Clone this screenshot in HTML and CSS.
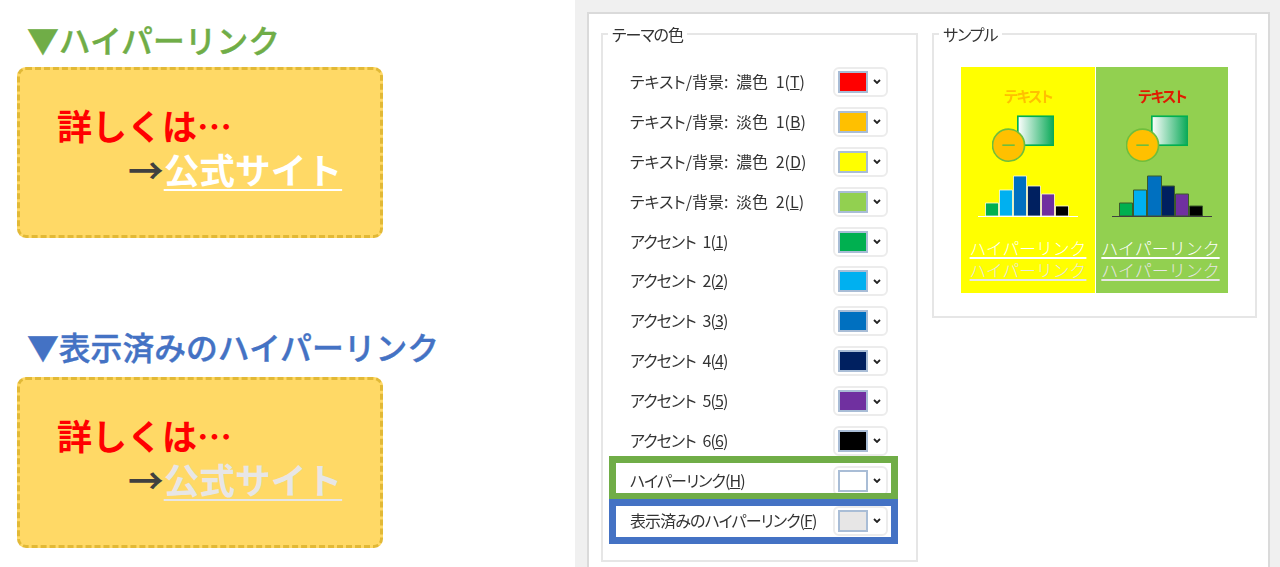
FILE: index.html
```html
<!DOCTYPE html>
<html lang="ja">
<head>
<meta charset="utf-8">
<title>テーマの色</title>
<link rel="stylesheet" href="styles.css">
</head>
<body>
<main class="page">
  <section class="examples">
    <div class="example">
      <h2 class="heading green-text">▼ハイパーリンク</h2>
      <div class="card">
        <p class="card-lead">詳しくは…</p>
        <p class="card-link"><span class="arrow">→</span><span class="link-new">公式サイト</span></p>
      </div>
    </div>
    <div class="example">
      <h2 class="heading blue-text">▼表示済みのハイパーリンク</h2>
      <div class="card">
        <p class="card-lead">詳しくは…</p>
        <p class="card-link"><span class="arrow">→</span><span class="link-old">公式サイト</span></p>
      </div>
    </div>
  </section>

  <section class="dialog">
    <div class="panel">
      <div class="group group-colors">
        <span class="legend">テーマの色</span>
        <ul class="rows">
          <li class="row"><span class="label">テキスト/背景: 濃色 1(<u>T</u>)</span><span class="picker"><i class="swatch c-red"></i><svg class="chev" viewBox="0 0 8 5"><path d="M1 1l3 3 3-3"/></svg></span></li>
          <li class="row"><span class="label">テキスト/背景: 淡色 1(<u>B</u>)</span><span class="picker"><i class="swatch c-orange"></i><svg class="chev" viewBox="0 0 8 5"><path d="M1 1l3 3 3-3"/></svg></span></li>
          <li class="row"><span class="label">テキスト/背景: 濃色 2(<u>D</u>)</span><span class="picker"><i class="swatch c-yellow"></i><svg class="chev" viewBox="0 0 8 5"><path d="M1 1l3 3 3-3"/></svg></span></li>
          <li class="row"><span class="label">テキスト/背景: 淡色 2(<u>L</u>)</span><span class="picker"><i class="swatch c-lime"></i><svg class="chev" viewBox="0 0 8 5"><path d="M1 1l3 3 3-3"/></svg></span></li>
          <li class="row"><span class="label label-tight">アクセント 1(<u>1</u>)</span><span class="picker"><i class="swatch c-green"></i><svg class="chev" viewBox="0 0 8 5"><path d="M1 1l3 3 3-3"/></svg></span></li>
          <li class="row"><span class="label label-tight">アクセント 2(<u>2</u>)</span><span class="picker"><i class="swatch c-sky"></i><svg class="chev" viewBox="0 0 8 5"><path d="M1 1l3 3 3-3"/></svg></span></li>
          <li class="row"><span class="label label-tight">アクセント 3(<u>3</u>)</span><span class="picker"><i class="swatch c-blue"></i><svg class="chev" viewBox="0 0 8 5"><path d="M1 1l3 3 3-3"/></svg></span></li>
          <li class="row"><span class="label label-tight">アクセント 4(<u>4</u>)</span><span class="picker"><i class="swatch c-navy"></i><svg class="chev" viewBox="0 0 8 5"><path d="M1 1l3 3 3-3"/></svg></span></li>
          <li class="row"><span class="label label-tight">アクセント 5(<u>5</u>)</span><span class="picker"><i class="swatch c-purple"></i><svg class="chev" viewBox="0 0 8 5"><path d="M1 1l3 3 3-3"/></svg></span></li>
          <li class="row"><span class="label label-tight">アクセント 6(<u>6</u>)</span><span class="picker"><i class="swatch c-black"></i><svg class="chev" viewBox="0 0 8 5"><path d="M1 1l3 3 3-3"/></svg></span></li>
          <li class="row mark mark-green"><span class="label label-tight">ハイパーリンク(<u>H</u>)</span><span class="picker"><i class="swatch c-white"></i><svg class="chev" viewBox="0 0 8 5"><path d="M1 1l3 3 3-3"/></svg></span></li>
          <li class="row mark mark-blue"><span class="label label-tight">表示済みのハイパーリンク(<u>F</u>)</span><span class="picker"><i class="swatch c-gray"></i><svg class="chev" viewBox="0 0 8 5"><path d="M1 1l3 3 3-3"/></svg></span></li>
        </ul>
      </div>
      <div class="group group-sample">
        <span class="legend">サンプル</span>
        <div class="sample">
          <div class="side side-yellow">
            <span class="sample-title t-orange">テキスト</span>
            <svg class="shapes" viewBox="0 0 60 46"><defs><linearGradient id="gy"><stop offset="0" stop-color="#fff"/><stop offset="1" stop-color="#00a651"/></linearGradient></defs><rect x="25" y="1" width="36" height="28" fill="url(#gy)" stroke="#00b050" stroke-width="1.6"/><circle cx="16" cy="29" r="15.500" fill="#ffc000" stroke="#6fbe3c" stroke-width="1.600"/><path d="M10 29h12" stroke="#6fbe3c" stroke-width="1.600"/></svg>
            <svg class="bars" viewBox="0 0 100 42"><g stroke="#fffbe0" stroke-width="0.800"><path d="M7.500 28h13v13h-13z" fill="#00b050"/><path d="M21.500 15h13v26h-13z" fill="#00b0f0"/><path d="M35.500 1h13v40h-13z" fill="#0070c0"/><path d="M49.500 11h13v30h-13z" fill="#002060"/><path d="M63.500 19h13v22h-13z" fill="#7030a0"/><path d="M77.500 31h13v10h-13z" fill="#000"/></g><path d="M0 41.500h100" stroke="#fff" stroke-width="1.200"/></svg>
            <span class="sample-link l-new">ハイパーリンク</span>
            <span class="sample-link l-old">ハイパーリンク</span>
          </div>
          <div class="side side-lime">
            <span class="sample-title t-red">テキスト</span>
            <svg class="shapes" viewBox="0 0 60 46"><defs><linearGradient id="gl"><stop offset="0" stop-color="#fff"/><stop offset="1" stop-color="#00a651"/></linearGradient></defs><rect x="25" y="1" width="36" height="28" fill="url(#gl)" stroke="#00b050" stroke-width="1.6"/><circle cx="16" cy="29" r="15.500" fill="#ffc000" stroke="#6fbe3c" stroke-width="1.600"/><path d="M10 29h12" stroke="#6fbe3c" stroke-width="1.600"/></svg>
            <svg class="bars" viewBox="0 0 100 42"><g stroke="#3b5a2a" stroke-width="1"><path d="M7.500 28h13v13h-13z" fill="#00b050"/><path d="M21.500 15h13v26h-13z" fill="#00b0f0"/><path d="M35.500 1h14v40h-14z" fill="#0070c0"/><path d="M49.500 11h13v30h-13z" fill="#002060"/><path d="M63.500 19h13v22h-13z" fill="#7030a0"/><path d="M77.500 31h13v10h-13z" fill="#000"/></g><path d="M0 41.500h100" stroke="#404040" stroke-width="1.200"/></svg>
            <span class="sample-link l-new">ハイパーリンク</span>
            <span class="sample-link l-old">ハイパーリンク</span>
          </div>
        </div>
      </div>
    </div>
  </section>
</main>
</body>
</html>
```
FILE: styles.css
```css
*, *::after { box-sizing: border-box; }
html, body { margin: 0; padding: 0; }
body {
  width: 1280px;
  height: 567px;
  overflow: hidden;
  background: #fff;
  font-family: "Noto Sans CJK JP", "Liberation Sans", sans-serif;
}
.page { display: flex; height: 567px; }

.examples {
  width: 575px;
  flex: none;
  padding: 16px 0 0 17px;
  display: flex;
  flex-direction: column;
  gap: 85px;
}
.example { display: flex; flex-direction: column; }
.heading {
  margin: 0 0 5px 10px;
  font-size: 31.800px;
  line-height: 46px;
  height: 46px;
  font-weight: 500;
  -webkit-text-stroke: 0.4px currentColor;
  white-space: nowrap;
}
.green-text { color: #70ad47; }
.blue-text { color: #4472c4; margin-bottom: 8px; }
.card {
  width: 366px;
  height: 171px;
  background: #ffd966;
  border: 3px dashed #e2b936;
  border-radius: 9px;
  padding: 33px 0 0 37px;
}
.card p { margin: 0; white-space: nowrap; }
.card-lead {
  font-size: 35px;
  line-height: 44px;
  font-weight: 700;
  color: #ff0000;
}
.card-link {
  font-size: 35.700px;
  line-height: 44px;
  font-weight: 700;
  padding-left: 71px;
}
.arrow { color: #404040; }
.link-new, .link-old {
  text-decoration: underline;
  text-decoration-thickness: 2px;
  text-underline-offset: 5px;
}
.link-new { color: #fff; }
.link-old { color: #e7e6e6; }

.dialog {
  flex: 1;
  background: #f0f0f0;
  padding: 12px 10px 0 12px;
}
.panel {
  background: #fff;
  height: 100%;
  border: 2px solid #dadada;
  border-bottom: 0;
  padding: 19px 9px 0 12px;
  display: flex;
  align-items: flex-start;
  gap: 14px;
}
.group {
  position: relative;
  border: 2px solid #e6e6e6;
  flex: none;
}
.group-colors { width: 317px; height: 529px; padding: 27px 0 0 27px; }
.group-sample { width: 325px; height: 285px; padding: 32px 0 0 27px; }
.legend {
  position: absolute;
  top: -11px;
  left: 5px;
  padding: 0 4px;
  background: #fff;
  font-size: 16px;
  line-height: 20px;
  letter-spacing: -1px;
  font-feature-settings: "palt";
  color: #333;
  white-space: nowrap;
  filter: blur(0.3px);
}
.rows { list-style: none; margin: 0; padding: 0; display: flex; flex-direction: column; }
.row {
  height: 39.900px;
  display: flex;
  align-items: center;
  justify-content: space-between;
  width: 258px;
  position: relative;
}
.label {
  font-size: 16px;
  font-feature-settings: "palt";
  word-spacing: 4px;
  padding-bottom: 2px;
  color: #333;
  white-space: nowrap;
  filter: blur(0.3px);
}
.label-tight { letter-spacing: -0.900px; }
.picker {
  width: 55px;
  height: 30px;
  border: 2px solid #ececec;
  border-radius: 6px;
  background: #fff;
  display: flex;
  align-items: center;
  padding-left: 3px;
  gap: 5px;
  position: relative;
  z-index: 1;
}
.swatch {
  display: block;
  width: 30px;
  height: 22px;
  border: 2px solid #a9bdd6;
}
.chev { width: 8px; height: 5px; fill: none; stroke: #222; stroke-width: 1.800; }
.c-red { background: #ff0000; }
.c-orange { background: #ffc000; }
.c-yellow { background: #ffff00; }
.c-lime { background: #92d050; }
.c-green { background: #00b050; }
.c-sky { background: #00b0f0; }
.c-blue { background: #0070c0; }
.c-navy { background: #002060; }
.c-purple { background: #7030a0; }
.c-black { background: #000; }
.c-white { background: #fff; }
.c-gray { background: #e7e6e6; }

.mark::after {
  content: "";
  position: absolute;
  left: -21px;
  width: 289px;
  border: 7px solid;
  z-index: 2;
  pointer-events: none;
}
.mark-green::after { top: -5px; height: 44px; border-color: #70ad47; }
.mark-blue::after { top: -2px; height: 45px; border-color: #4472c4; }

.sample { display: flex; width: 267px; height: 226px; gap: 1px; background: #fff; }
.side {
  display: flex;
  flex-direction: column;
  align-items: center;
  padding-top: 17px;
}
.side-yellow { background: #ffff00; width: 134px; }
.side-lime { background: #92d050; width: 132px; }
.sample-title {
  font-size: 15px;
  line-height: 24px;
  height: 24px;
  font-weight: 700;
  letter-spacing: -1.500px;
  font-feature-settings: "palt";
  filter: blur(0.3px);
}
.t-orange { color: #ffc000; }
.t-red { color: #e01b00; }
.shapes { width: 62px; height: 48px; margin: 7px 10px 0 0; display: block; }
.bars { width: 100px; height: 42px; margin-top: 12px; display: block; }
.sample-link {
  font-size: 16.800px;
  font-weight: 300;
  line-height: 22px;
  height: 22px;
  white-space: nowrap;
  text-decoration: underline;
  text-decoration-thickness: 1.500px;
  text-underline-offset: 2px;
}
.side-lime .sample-link { font-size: 17px; margin-right: 3px; }
.l-new { color: #fff; margin-top: 20px; }
.l-old { color: #e7e6e6; margin-top: 0; }
.side-lime .l-new { margin-top: 20px; }
```
